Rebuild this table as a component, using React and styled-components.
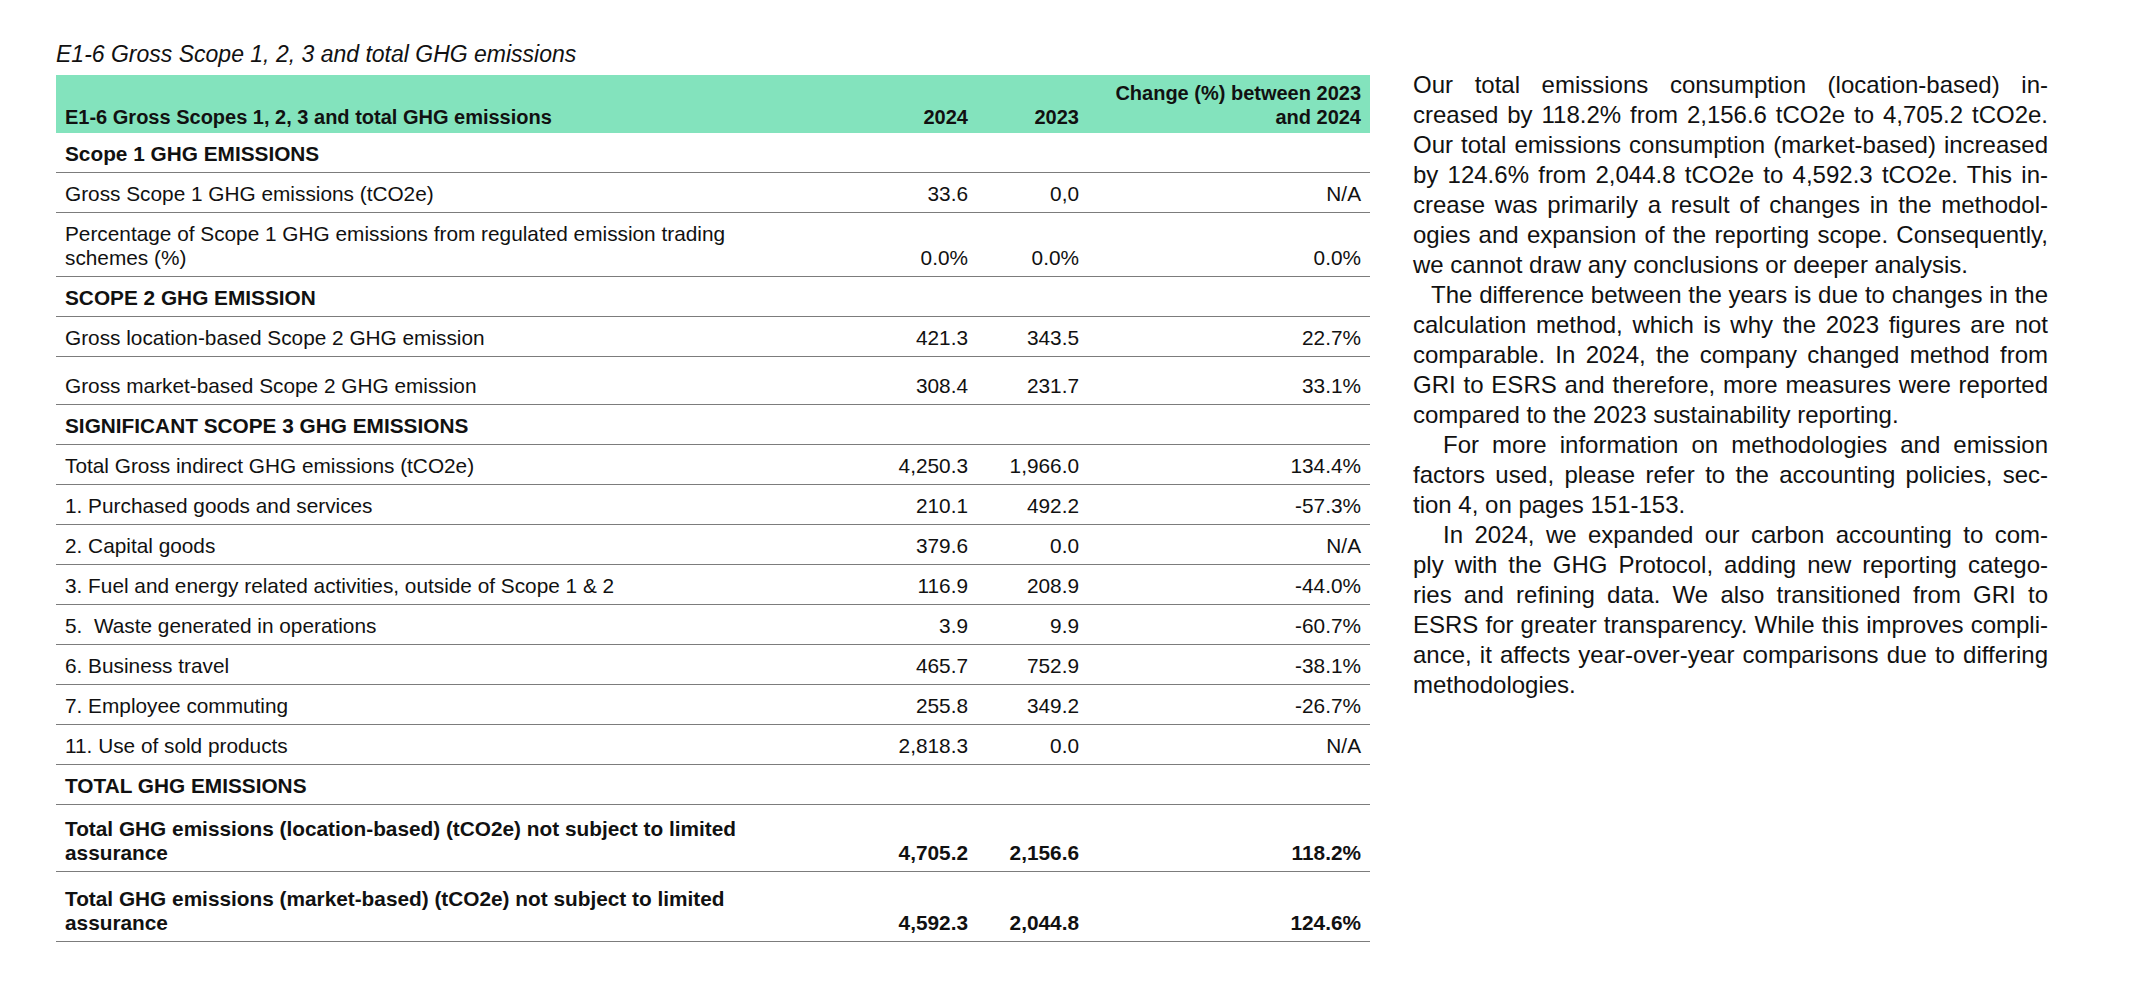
import React from "react";
import styled, { createGlobalStyle } from "styled-components";

const GlobalStyle = createGlobalStyle`
    body {
        margin: 0;
        background: #ffffff;
        color: #111111;
        font-family: "Liberation Sans", Arial, sans-serif;
    }
`;

const Page = styled.div`
    display: flex;
    align-items: flex-start;
    gap: 43px;
    padding: 41px 0 0 56px;
`;

const TableBlock = styled.section`
    width: 1314px;
    flex-shrink: 0;
`;

const Caption = styled.div`
    font-style: italic;
    font-size: 23px;
    line-height: 26px;
    margin-bottom: 8px;
`;

const Table = styled.table`
    width: 100%;
    table-layout: fixed;
    border-collapse: separate;
    border-spacing: 0;
    font-size: 20.8px;
    line-height: 24px;
`;

const HeadCell = styled.th`
    background: #83e3bd;
    font-size: 20px;
    font-weight: 700;
    white-space: nowrap;
    text-align: ${(p) => (p.$left ? "left" : "right")};
    vertical-align: bottom;
    padding: 6px 9px 4px 9px;
`;

const Cell = styled.td`
    text-align: ${(p) => (p.$left ? "left" : "right")};
    vertical-align: bottom;
    font-weight: ${(p) => (p.$bold ? 700 : 400)};
    white-space: pre-line;
    padding: ${(p) => 9 + (p.$extra || 0)}px 9px 6px 9px;
    border-bottom: 1px solid #7c7c7c;
`;

const Aside = styled.div`
    width: 635px;
    flex-shrink: 0;
    margin-top: 29px;
    font-size: 24px;
    line-height: 30px;
`;

const Line = styled.div`
    white-space: nowrap;
    text-align: justify;
    text-align-last: ${(p) => (p.$last ? "left" : "justify")};
    text-indent: ${(p) => p.$indent || 0}px;
`;

const rows = [
    { section: "Scope 1 GHG EMISSIONS" },
    { label: "Gross Scope 1 GHG emissions (tCO2e)", v: ["33.6", "0,0", "N/A"] },
    {
        label: "Percentage of Scope 1 GHG emissions from regulated emission trading\nschemes (%)",
        v: ["0.0%", "0.0%", "0.0%"],
    },
    { section: "SCOPE 2 GHG EMISSION" },
    { label: "Gross location-based Scope 2 GHG emission", v: ["421.3", "343.5", "22.7%"] },
    { label: "Gross market-based Scope 2 GHG emission", v: ["308.4", "231.7", "33.1%"], extra: 8 },
    { section: "SIGNIFICANT SCOPE 3 GHG EMISSIONS" },
    { label: "Total Gross indirect GHG emissions (tCO2e)", v: ["4,250.3", "1,966.0", "134.4%"] },
    { label: "1. Purchased goods and services", v: ["210.1", "492.2", "-57.3%"] },
    { label: "2. Capital goods", v: ["379.6", "0.0", "N/A"] },
    { label: "3. Fuel and energy related activities, outside of Scope 1 & 2", v: ["116.9", "208.9", "-44.0%"] },
    { label: "5.\u00a0 Waste generated in operations", v: ["3.9", "9.9", "-60.7%"] },
    { label: "6. Business travel", v: ["465.7", "752.9", "-38.1%"] },
    { label: "7. Employee commuting", v: ["255.8", "349.2", "-26.7%"] },
    { label: "11. Use of sold products", v: ["2,818.3", "0.0", "N/A"] },
    { section: "TOTAL GHG EMISSIONS" },
    {
        label: "Total GHG emissions (location-based) (tCO2e) not subject to limited\nassurance",
        v: ["4,705.2", "2,156.6", "118.2%"],
        bold: true,
        extra: 3,
    },
    {
        label: "Total GHG emissions (market-based) (tCO2e) not subject to limited\nassurance",
        v: ["4,592.3", "2,044.8", "124.6%"],
        bold: true,
        extra: 6,
    },
];

// each printed line kept as in the report, justified like the column
const paragraphs = [
    {
        indent: 0,
        lines: [
            "Our total emissions consumption (location-based) in-",
            "creased by 118.2% from 2,156.6 tCO2e to 4,705.2 tCO2e.",
            "Our total emissions consumption (market-based) increased",
            "by 124.6% from 2,044.8 tCO2e to 4,592.3 tCO2e. This in-",
            "crease was primarily a result of changes in the methodol-",
            "ogies and expansion of the reporting scope. Consequently,",
            "we cannot draw any conclusions or deeper analysis.",
        ],
    },
    {
        indent: 18,
        lines: [
            "The difference between the years is due to changes in the",
            "calculation method, which is why the 2023 figures are not",
            "comparable. In 2024, the company changed method from",
            "GRI to ESRS and therefore, more measures were reported",
            "compared to the 2023 sustainability reporting.",
        ],
    },
    {
        indent: 30,
        lines: [
            "For more information on methodologies and emission",
            "factors used, please refer to the accounting policies, sec-",
            "tion 4, on pages 151-153.",
        ],
    },
    {
        indent: 30,
        lines: [
            "In 2024, we expanded our carbon accounting to com-",
            "ply with the GHG Protocol, adding new reporting catego-",
            "ries and refining data. We also transitioned from GRI to",
            "ESRS for greater transparency. While this improves compli-",
            "ance, it affects year-over-year comparisons due to differing",
            "methodologies.",
        ],
    },
];

const App = () => {
    return (
        <>
            <GlobalStyle />
            <Page>
                <TableBlock>
                    <Caption>E1-6 Gross Scope 1, 2, 3 and total GHG emissions</Caption>
                    <Table>
                        <colgroup>
                            <col style={{ width: 801 }} />
                            <col style={{ width: 120 }} />
                            <col style={{ width: 111 }} />
                            <col style={{ width: 282 }} />
                        </colgroup>
                        <thead>
                            <tr>
                                <HeadCell $left>E1-6 Gross Scopes 1, 2, 3 and total GHG emissions</HeadCell>
                                <HeadCell>2024</HeadCell>
                                <HeadCell>2023</HeadCell>
                                <HeadCell>
                                    Change (%) between 2023
                                    <br />
                                    and 2024
                                </HeadCell>
                            </tr>
                        </thead>
                        <tbody>
                            {rows.map((r, i) =>
                                r.section ? (
                                    <tr key={i}>
                                        <Cell $left $bold>
                                            {r.section}
                                        </Cell>
                                        <Cell />
                                        <Cell />
                                        <Cell />
                                    </tr>
                                ) : (
                                    <tr key={i}>
                                        <Cell $left $bold={r.bold} $extra={r.extra}>
                                            {r.label}
                                        </Cell>
                                        {r.v.map((v, j) => (
                                            <Cell key={j} $bold={r.bold} $extra={r.extra}>
                                                {v}
                                            </Cell>
                                        ))}
                                    </tr>
                                )
                            )}
                        </tbody>
                    </Table>
                </TableBlock>
                <Aside>
                    {paragraphs.map((p, i) =>
                        p.lines.map((l, j) => (
                            <Line
                                key={i + "-" + j}
                                $indent={j === 0 ? p.indent : 0}
                                $last={j === p.lines.length - 1}
                            >
                                {l}
                            </Line>
                        ))
                    )}
                </Aside>
            </Page>
        </>
    );
};

export default App;
